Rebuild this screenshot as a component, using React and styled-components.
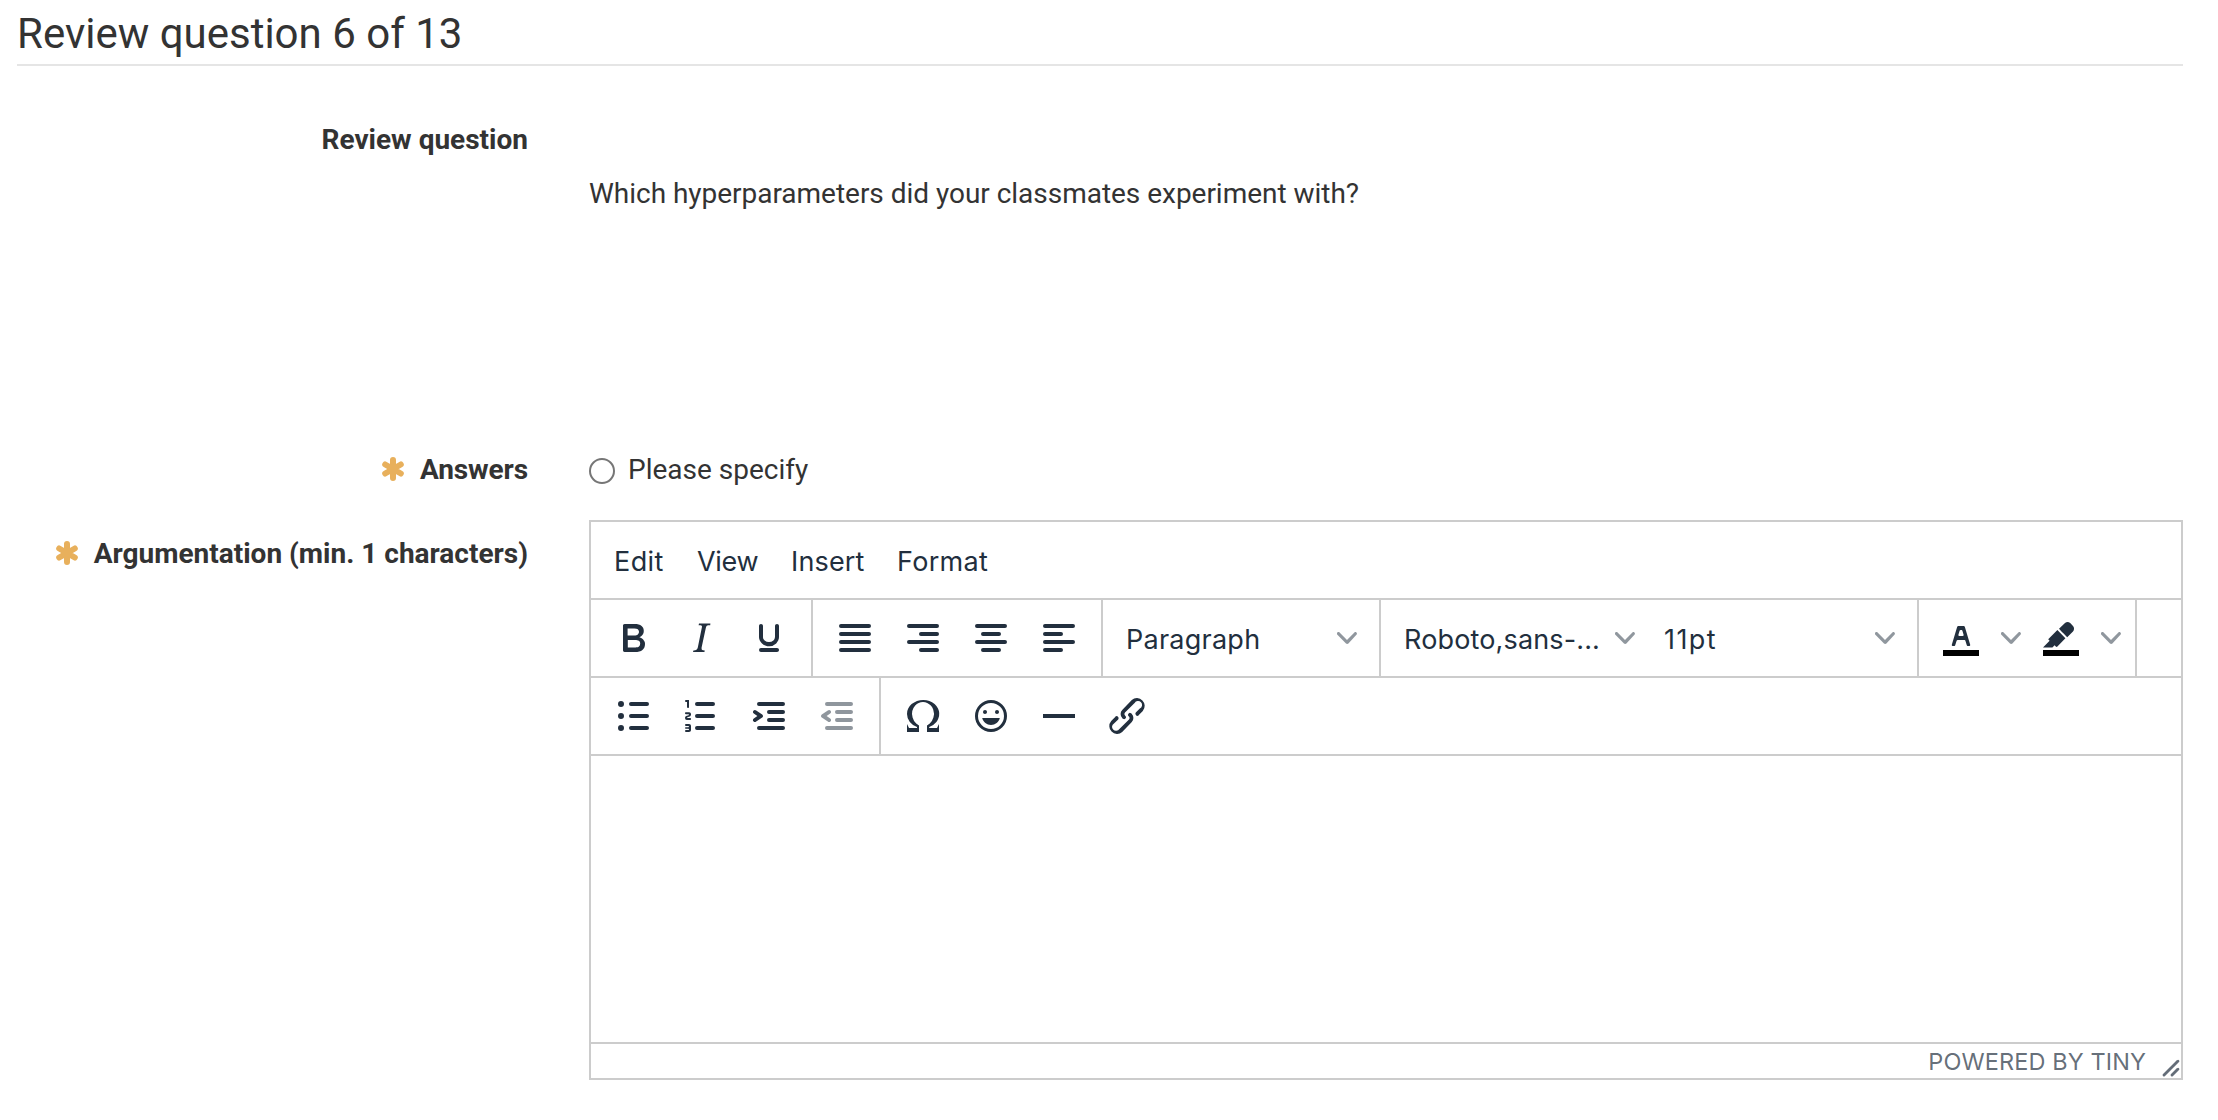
import React from "react";
import styled, { createGlobalStyle, css } from "styled-components";

const Global = createGlobalStyle`
  * { box-sizing: border-box; }
  body {
    margin: 0;
    background: #fff;
    color: #333;
    font: 28px/40px Roboto, sans-serif;
  }
`;

const Page = styled.main`
  height: 1120px;
  padding: 0 35px 0 17px;
`;

const Title = styled.h1`
  height: 66px;
  margin: 0;
  padding-top: 9px;
  border-bottom: 2px solid #e5e5e5;
  font-size: 42px;
  line-height: 50px;
  font-weight: 400;
`;

const Row = styled.div`
  display: grid;
  grid-template-columns: 511px 1594px;
  column-gap: 61px;
  height: ${(p) => p.$height}px;
`;

const Label = styled.div`
  display: flex;
  justify-content: flex-end;
  gap: 16px;
  padding-top: ${(p) => p.$top}px;
  font-weight: 700;
  white-space: nowrap;
  letter-spacing: ${(p) => p.$spacing || 0}px;
`;

const Star = styled.svg`
  width: 22px;
  height: 40px;
  fill: none;
  stroke: #e8b05c;
  stroke-width: 6;
  stroke-linecap: round;
`;

const Question = styled.p`
  margin: 0;
  padding-top: 108px;
  letter-spacing: -0.025px;
`;

const Option = styled.label`
  display: flex;
  gap: 13px;
  padding-top: 10px;
`;

const Radio = styled.input`
  appearance: none;
  width: 26px;
  height: 26px;
  margin: 8px 0 0;
  border: 2px solid #767676;
  border-radius: 50%;
`;

const Editor = styled.section`
  display: flex;
  flex-direction: column;
  height: 560px;
  border: 2px solid #ccc;
  color: #222f3e;
  font-family: Inter, sans-serif;
  font-size: 27px;
`;

const Bar = styled.div`
  display: flex;
  flex: none;
  height: 78px;
  border-bottom: 2px solid #ccc;
`;

const MenuBar = styled(Bar)`
  padding: 20px 0 0 23px;
  gap: 33px;
`;

const MenuItem = styled.span`
  width: ${(p) => p.$width}px;
  white-space: nowrap;
  letter-spacing: ${(p) => p.$spacing}px;
`;

const Group = styled.div`
  display: flex;
  align-items: center;
  padding: 0 8px;
  ${(p) => !p.$last && css`border-right: 2px solid #ccc;`}
`;

const Tool = styled.button`
  display: flex;
  align-items: center;
  justify-content: center;
  width: 68px;
  height: 68px;
  padding: 0;
  border: 0;
  background: none;
  color: inherit;
  opacity: ${(p) => (p.disabled ? 0.5 : 1)};
`;

const Icon = styled.svg`
  width: 48px;
  height: 48px;
  fill: currentColor;
`;

const Chevron = styled.svg`
  width: 20px;
  height: 20px;
  flex: none;
  fill: rgba(34, 47, 62, 0.5);
`;

const Arrow = styled.span`
  display: flex;
  justify-content: center;
  width: 32px;
`;

const Select = styled.div`
  display: flex;
  align-items: center;
  justify-content: space-between;
  width: 260px;
  padding: 0 14px 0 15px;
  white-space: nowrap;
`;

const SelectText = styled.span`
  padding-top: 4px;
  letter-spacing: ${(p) => p.$spacing}px;
`;

const Body = styled.div`
  flex: 1;
`;

const Status = styled.footer`
  display: flex;
  justify-content: flex-end;
  height: 36px;
  border-top: 2px solid #ccc;
  color: rgba(34, 47, 62, 0.7);
  font-size: 23.5px;
  line-height: 35px;
`;

const Brand = styled.span`
  margin-right: 15px;
  letter-spacing: 0.1px;
`;

const Grip = styled.svg`
  width: 20px;
  height: 20px;
  margin-top: 14px;
  fill: currentColor;
`;

const bar = (x, y, w) => `M${x} ${y}h${w}a1 1 0 0 1 0 2H${x}a1 1 0 0 1 0-2z`;

const paths = {
  bold: "M7.8 19c-.3 0-.5 0-.6-.2l-.2-.5V5.7c0-.2 0-.4.2-.5l.6-.2h5c1.5 0 2.7.3 3.5 1 .7.6 1.1 1.4 1.1 2.5a3 3 0 0 1-.6 1.9c-.4.6-1 1-1.6 1.2.4.1.9.3 1.3.6s.8.7 1 1.2c.4.4.5 1 .5 1.6 0 1.3-.4 2.3-1.3 3-.8.7-2.1 1-3.8 1H7.8zm5-8.3c.6 0 1.2-.1 1.6-.5.4-.3.6-.7.6-1.3 0-1.1-.8-1.7-2.3-1.7H9.3v3.5h3.4zm.5 6c.7 0 1.3-.1 1.7-.4.4-.4.6-.9.6-1.5s-.2-1-.7-1.4c-.4-.3-1-.4-2-.4H9.4v3.8h4z",
  italic: "M16.7 4.7l-.1.9h-.3c-.6 0-1 0-1.4.3-.3.3-.4.6-.5 1.1l-2.1 9.8v.6c0 .5.4.8 1.4.8h.2l-.2.8H8l.2-.8h.2c1.1 0 1.8-.5 2-1.5l2-9.8.1-.5c0-.6-.4-.8-1.4-.8h-.3l.2-.9h5.8z",
  underline: "M16 5c.6 0 1 .4 1 1v5.5a4 4 0 0 1-.4 1.8l-1 1.4a5.3 5.3 0 0 1-5.5 1 5 5 0 0 1-1.6-1c-.5-.4-.8-.9-1.1-1.4a4 4 0 0 1-.4-1.8V6c0-.6.4-1 1-1s1 .4 1 1v5.5c0 .3 0 .6.2 1l.6.7a3.3 3.3 0 0 0 2.2.8 3.4 3.4 0 0 0 2.2-.8c.3-.2.4-.5.6-.8l.2-.9V6c0-.6.4-1 1-1zM8 17h8c.6 0 1 .4 1 1s-.4 1-1 1H8a1 1 0 0 1 0-2z",
  justify: bar(5, 5, 14) + bar(5, 9, 14) + bar(5, 13, 14) + bar(5, 17, 14),
  right: bar(5, 5, 14) + bar(11, 9, 8) + bar(5, 13, 14) + bar(11, 17, 8),
  center: bar(5, 5, 14) + bar(8, 9, 8) + bar(5, 13, 14) + bar(8, 17, 8),
  left: bar(5, 5, 14) + bar(5, 9, 8) + bar(5, 13, 14) + bar(5, 17, 8),
  bullets:
    bar(11, 5, 8) + bar(11, 11, 8) + bar(11, 17, 8) +
    "M4.5 6a1.5 1.5 0 1 1 3 0 1.5 1.5 0 0 1-3 0zm0 6a1.5 1.5 0 1 1 3 0 1.5 1.5 0 0 1-3 0zm0 6a1.5 1.5 0 1 1 3 0 1.5 1.5 0 0 1-3 0z",
  numbers:
    bar(10, 5, 8) + bar(10, 11, 8) + bar(10, 17, 8) +
    "M6 4v3.5c0 .3-.2.5-.5.5a.5.5 0 0 1-.5-.5V5h-.5a.5.5 0 0 1 0-1H6zm-1 8.8l.2.2h1.3c.3 0 .5.2.5.5s-.2.5-.5.5H4.9a1 1 0 0 1-.9-1V13c0-.4.3-.8.6-1l1.2-.4.2-.3a.2.2 0 0 0-.2-.2H4.5a.5.5 0 0 1-.5-.5c0-.3.2-.5.5-.5h1.6c.5 0 .9.4.9 1v.1c0 .4-.3.8-.6 1l-1.2.4-.2.3zM7 17v2c0 .6-.4 1-1 1H4.5a.5.5 0 0 1 0-1h1.2c.2 0 .3-.1.3-.3 0-.2-.1-.3-.3-.3H4.4a.4.4 0 1 1 0-.8h1.3c.2 0 .3-.1.3-.3 0-.2-.1-.3-.3-.3H4.5a.5.5 0 1 1 0-1H6c.6 0 1 .4 1 1z",
  indent:
    bar(7, 5, 12) + bar(12, 9, 7) + bar(12, 13, 7) + bar(7, 17, 12) +
    "M4.4 13.2L6.2 12l-1.8-1.2a1 1 0 0 1 1.2-1.6l3 2a1 1 0 0 1 0 1.6l-3 2a1 1 0 1 1-1.2-1.6z",
  outdent:
    bar(7, 5, 12) + bar(12, 9, 7) + bar(12, 13, 7) + bar(7, 17, 12) +
    "M8.6 13.2a1 1 0 0 1-1.2 1.6l-3-2a1 1 0 0 1 0-1.6l3-2a1 1 0 0 1 1.2 1.6L6.8 12l1.8 1.2z",
  omega: "M15 18h4l1-2v4h-6v-3.3l1.4-1a6 6 0 0 0 1.8-2.9 6.3 6.3 0 0 0-.1-4.1 5.8 5.8 0 0 0-3-3.2c-.6-.3-1.3-.5-2.1-.5a5.1 5.1 0 0 0-3.9 1.8 6.3 6.3 0 0 0-1.3 6 6.2 6.2 0 0 0 1.8 3l1.4.9V20H4v-4l1 2h4v-.5l-2-1L5.4 15A6.5 6.5 0 0 1 4 11c0-1 .2-1.9.6-2.7A7 7 0 0 1 6.3 6C7.1 5.4 8 5 9 4.5c1-.3 2-.5 3.1-.5a8.8 8.8 0 0 1 5.7 2 7 7 0 0 1 1.7 2.3 6 6 0 0 1 .2 4.8c-.2.7-.6 1.3-1 1.9a7.6 7.6 0 0 1-3.6 2.5v.5z",
  emoji: "M9 11c.6 0 1-.4 1-1s-.4-1-1-1a1 1 0 0 0-1 1c0 .6.4 1 1 1zm6 0c.6 0 1-.4 1-1s-.4-1-1-1a1 1 0 0 0-1 1c0 .6.4 1 1 1zm-3 5.5c2.1 0 4-1.5 4.4-3.5H7.6c.5 2 2.3 3.5 4.4 3.5zM12 4a8 8 0 1 0 0 16 8 8 0 0 0 0-16zm0 14.5a6.5 6.5 0 1 1 0-13 6.5 6.5 0 0 1 0 13z",
  rule: "M4 11h16v2H4z",
  link: "M6.2 12.3a1 1 0 0 1 1.4 1.4l-2.1 2a2 2 0 1 0 2.7 2.8l4.8-4.8a1 1 0 0 0 0-1.4 1 1 0 1 1 1.4-1.3 2.9 2.9 0 0 1 0 4L9.6 20a3.9 3.9 0 0 1-5.5-5.5l2-2zm11.6-.6a1 1 0 0 1-1.4-1.4l2-2a2 2 0 1 0-2.6-2.8L11 10.3a1 1 0 0 0 0 1.4A1 1 0 1 1 9.6 13a2.9 2.9 0 0 1 0-4L14.4 4a3.9 3.9 0 0 1 5.5 5.5l-2 2z",
  color: "M8.7 16h-.8a.5.5 0 0 1-.5-.6l2.7-9c.1-.3.3-.4.5-.4h2.8c.2 0 .4.1.5.4l2.7 9a.5.5 0 0 1-.5.6h-.8a.5.5 0 0 1-.4-.4l-.7-2.2c0-.3-.3-.4-.5-.4h-3.4c-.2 0-.4.1-.5.4l-.7 2.2c0 .3-.2.4-.4.4zm2.6-7.6l-.6 2a.5.5 0 0 0 .5.6h1.6a.5.5 0 0 0 .5-.6l-.6-2c0-.3-.3-.4-.5-.4h-.4c-.2 0-.4.1-.5.4z",
  highlight: "M7.7 16.7H3l3.3-3.3-.7-.8L10.2 8l4 4.1-4 4.2c-.2.2-.6.2-.8 0l-.6-.7-1.1 1.1zm5-7.5L11 7.4l3-2.9a2 2 0 0 1 2.6 0L18 6c.7.7.7 2 0 2.7l-2.9 2.9-1.8-1.8-.5-.6",
};

const ToolButton = ({ name, disabled, swatch }) => (
  <Tool disabled={disabled} aria-label={name}>
    <Icon viewBox="0 0 24 24">
      <path d={paths[name]} fillRule="evenodd" />
      {swatch && <path d="M3 18h18v3H3z" fill="#000" />}
    </Icon>
  </Tool>
);

const Caret = () => (
  <Chevron viewBox="0 0 10 10">
    <path d="M8.7 2.2c.3-.3.8-.3 1 0 .4.4.4.9 0 1.2L5.7 7.8c-.3.3-.9.3-1.2 0L.2 3.4a.8.8 0 0 1 0-1.2c.3-.3.8-.3 1.1 0L5 6l3.7-3.8z" />
  </Chevron>
);

const Dropdown = ({ text, spacing }) => (
  <Select>
    <SelectText $spacing={spacing}>{text}</SelectText>
    <Caret />
  </Select>
);

const Required = () => (
  <Star viewBox="0 0 22 40">
    <path d="M11 10v18M3.2 14.5l15.6 9M18.8 14.5l-15.6 9" />
  </Star>
);

const menu = [
  { text: "Edit", width: 50, spacing: 0.4 },
  { text: "View", width: 61, spacing: -0.3 },
  { text: "Insert", width: 73, spacing: 0.15 },
  { text: "Format", width: 90, spacing: 0.3 },
];

export default function App() {
  return (
    <Page>
      <Global />
      <Title>Review question 6 of 13</Title>
      <Row $height={374}>
        <Label $top={54}>Review question</Label>
        <Question>Which hyperparameters did your classmates experiment with?</Question>
      </Row>
      <Row $height={80}>
        <Label $top={10} $spacing={-0.1}><Required />Answers</Label>
        <Option><Radio type="radio" />Please specify</Option>
      </Row>
      <Row $height={560}>
        <Label $top={14}><Required />Argumentation (min. 1 characters)</Label>
        <Editor>
          <MenuBar>
            {menu.map((m) => (
              <MenuItem key={m.text} $width={m.width} $spacing={m.spacing}>{m.text}</MenuItem>
            ))}
          </MenuBar>
          <Bar>
            <Group>
              {["bold", "italic", "underline"].map((n) => <ToolButton key={n} name={n} />)}
            </Group>
            <Group>
              {["justify", "right", "center", "left"].map((n) => <ToolButton key={n} name={n} />)}
            </Group>
            <Group><Dropdown text="Paragraph" spacing={0.25} /></Group>
            <Group>
              <Dropdown text="Roboto,sans-..." spacing={0.15} />
              <Dropdown text="11pt" spacing={1.4} />
            </Group>
            <Group>
              <ToolButton name="color" swatch />
              <Arrow><Caret /></Arrow>
              <ToolButton name="highlight" swatch />
              <Arrow><Caret /></Arrow>
            </Group>
          </Bar>
          <Bar>
            <Group>
              <ToolButton name="bullets" />
              <ToolButton name="numbers" />
              <ToolButton name="indent" />
              <ToolButton name="outdent" disabled />
            </Group>
            <Group $last>
              {["omega", "emoji", "rule", "link"].map((n) => <ToolButton key={n} name={n} />)}
            </Group>
          </Bar>
          <Body />
          <Status>
            <Brand>POWERED BY TINY</Brand>
            <Grip viewBox="0 0 10 10">
              <path d="M8.1 1.1A.5.5 0 1 1 9 2l-7 7A.5.5 0 1 1 1 8l7-7zM8.1 5.1A.5.5 0 1 1 9 6l-3 3A.5.5 0 1 1 5 8l3-3z" />
            </Grip>
          </Status>
        </Editor>
      </Row>
    </Page>
  );
}
